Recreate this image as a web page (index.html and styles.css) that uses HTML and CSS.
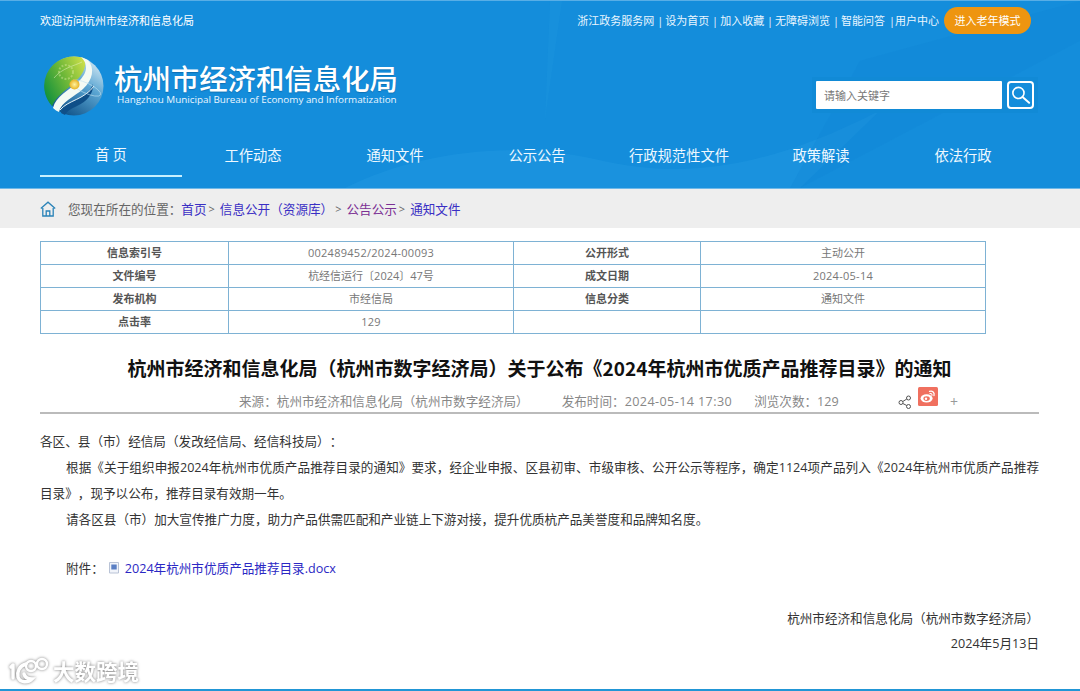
FILE: index.html
```html
<!DOCTYPE html>
<html lang="zh-CN">
<head>
<meta charset="utf-8">
<title>杭州市经济和信息化局</title>
<link rel="stylesheet" href="styles.css">
</head>
<body>
<header class="header">
  <svg class="decor" viewBox="0 0 1080 188" preserveAspectRatio="none" aria-hidden="true">
    <path d="M345 188 C420 150 520 140 600 160 C680 178 760 172 880 110 L800 188 Z" fill="#2aa0e6" opacity=".28"/>
    <path d="M550 0 L562 0 L545 120 Z" fill="#2aa0e6" opacity=".15"/>
    <path d="M860 60 L1080 0 L1080 40 L800 188 L790 188 Z" fill="#0f86d3" opacity=".3"/>
  </svg>
  <div class="topbar">
    <span class="welcome">欢迎访问杭州市经济和信息化局</span>
    <nav class="toplinks">
      <a class="tl-a">浙江政务服务网 |</a>
      <a class="tl-b">设为首页 |</a>
      <a class="tl-c">加入收藏 |</a>
      <a class="tl-d">无障碍浏览 |</a>
      <a class="tl-e">智能问答</a>
      <a class="tl-f">|用户中心</a>
      <a class="elder">进入老年模式</a>
    </nav>
  </div>
  <div class="brand-row">
    <div class="brand">
      <svg class="logo" viewBox="0 0 60 60" aria-hidden="true">
        <defs>
          <linearGradient id="lg" x1="0" y1="0.7" x2="1" y2="0.1">
            <stop offset="0" stop-color="#16933c"/><stop offset=".5" stop-color="#6fb838"/><stop offset="1" stop-color="#cfe04a"/>
          </linearGradient>
          <linearGradient id="lb" x1="0.9" y1="0.1" x2="0.3" y2="1">
            <stop offset="0" stop-color="#cfe6f2"/><stop offset=".4" stop-color="#5aa5d2"/><stop offset="1" stop-color="#0c4f86"/>
          </linearGradient>
          <radialGradient id="ls"><stop offset="0" stop-color="#fff3a0"/><stop offset="1" stop-color="#e8b323"/></radialGradient>
        </defs>
        <circle cx="30" cy="30" r="29.5" fill="url(#lb)"/>
        <path d="M30 .5 A29.5 29.5 0 0 0 8 50 C12 40 22 34 30 27 C38 20 44 10 40 2 A30 30 0 0 0 30 .5Z" fill="url(#lg)"/>
        <path d="M37 1 C46 10 42 19 33 27 C24 35 12 40 9 52 C11 54 13 55 15 56 C17 46 30 41 39 33 C49 24 51 12 44 4 Z" fill="#f4faf4"/>
        <path d="M17 57 C20 47 34 45 43 37 C46 34 48 31 49 28 C50 38 42 46 33 50 C26 53 22 56 21 59 Z" fill="#0f4f88"/>
        <path d="M16 54 C24 44 40 44 50 30" fill="none" stroke="#e6f2f8" stroke-width="1"/>
        <ellipse cx="42" cy="32" rx="16" ry="5" transform="rotate(25 42 32)" fill="none" stroke="#bfe0f0" stroke-width=".7" opacity=".8"/>
        <circle cx="22" cy="16" r="7" fill="none" stroke="#e6f0a8" stroke-width="2" stroke-dasharray="2 1.5" opacity=".4"/>
        <path d="M10 22 C18 12 30 10 38 6" fill="none" stroke="#e8f4c8" stroke-width=".7" opacity=".7"/>
        <circle cx="30.5" cy="28.5" r="5" fill="url(#ls)"/>
      </svg>
      <div class="brand-text">
        <div class="brand-cn">杭州市经济和信息化局</div>
        <div class="brand-en">Hangzhou Municipal Bureau of Economy and Informatization</div>
      </div>
    </div>
    <form class="search">
      <input class="search-input" type="text" placeholder="请输入关键字">
      <button class="search-btn" type="button" aria-label="搜索">
        <svg viewBox="0 0 28 28" aria-hidden="true">
          <circle cx="11.5" cy="11.5" r="6.8" fill="none" stroke-width="2"/>
          <path d="M16.5 16.5 L24.5 23.5" stroke-width="2.4" stroke-linecap="round"/>
        </svg>
      </button>
    </form>
  </div>
  <nav class="mainnav">
    <a class="nav-item is-active">首 页</a>
    <a class="nav-item">工作动态</a>
    <a class="nav-item">通知文件</a>
    <a class="nav-item">公示公告</a>
    <a class="nav-item">行政规范性文件</a>
    <a class="nav-item">政策解读</a>
    <a class="nav-item">依法行政</a>
  </nav>
</header>

<div class="crumbs">
  <svg class="home" viewBox="0 0 16 16" aria-hidden="true">
    <path d="M.8 7.5 L8 1.2 L15.2 7.5" fill="none" stroke="#2a83b8" stroke-width="1.3"/>
    <path d="M2.8 7 V15 H13.2 V7" fill="none" stroke="#2a83b8" stroke-width="1.3"/>
    <path d="M6.2 15 V10 H9.8 V15" fill="none" stroke="#2a83b8" stroke-width="1.3"/>
  </svg>
  <span class="crumb-label">您现在所在的位置：</span>
  <a class="crumb-link">首页</a><span class="crumb-sep">&gt;</span>
  <a class="crumb-link">信息公开（资源库）</a><span class="crumb-sep wide">&gt;</span>
  <a class="crumb-link visited">公告公示</a><span class="crumb-sep">&gt;</span>
  <a class="crumb-link">通知文件</a>
</div>

<main class="main">
  <table class="info">
    <colgroup><col class="c1"><col class="c2"><col class="c3"><col class="c4"></colgroup>
    <tr><th>信息索引号</th><td class="num">002489452/2024-00093</td><th>公开形式</th><td>主动公开</td></tr>
    <tr><th>文件编号</th><td>杭经信运行〔2024〕47号</td><th>成文日期</th><td class="num">2024-05-14</td></tr>
    <tr><th>发布机构</th><td>市经信局</td><th>信息分类</th><td>通知文件</td></tr>
    <tr><th>点击率</th><td class="num">129</td><th></th><td></td></tr>
  </table>

  <h1 class="title">杭州市经济和信息化局（杭州市数字经济局）关于公布《2024年杭州市优质产品推荐目录》的通知</h1>

  <div class="meta">
    <span class="meta-src">来源：杭州市经济和信息化局（杭州市数字经济局）</span>
    <span class="meta-time">发布时间：<span class="meta-num">2024-05-14 17:30</span></span>
    <span class="meta-views">浏览次数：129</span>
    <span class="share">
      <svg class="ico-share" viewBox="0 0 14 14" aria-hidden="true">
        <circle cx="3" cy="7.5" r="2" fill="none" stroke="#555" stroke-width="1"/>
        <circle cx="10.5" cy="3" r="2" fill="none" stroke="#555" stroke-width="1"/>
        <circle cx="10.5" cy="11.5" r="2" fill="none" stroke="#555" stroke-width="1"/>
        <path d="M4.8 6.5 L8.8 4 M4.8 8.5 L8.8 10.5" stroke="#555" stroke-width="1"/>
      </svg>
      <svg class="ico-weibo" viewBox="0 0 20 19" aria-hidden="true">
        <rect width="20" height="19" rx="1.5" fill="#f0705f"/>
        <ellipse cx="8.6" cy="11.4" rx="6" ry="4.2" fill="#fff"/>
        <ellipse cx="8.6" cy="11.6" rx="3.2" ry="2.4" fill="#f0705f"/>
        <circle cx="8" cy="11.7" r="1.2" fill="#fff"/>
        <path d="M11.5 4.4 C14.5 3.4 16.8 5.6 16 8.6" fill="none" stroke="#fff" stroke-width="1.3" stroke-linecap="round"/>
        <path d="M12 6.6 C13.3 6.2 14.3 7.1 14 8.4" fill="none" stroke="#fff" stroke-width="1.1" stroke-linecap="round"/>
      </svg>
      <span class="plus">+</span>
    </span>
  </div>

  <article class="content">
    <p class="lead">各区、县（市）经信局（发改经信局、经信科技局）：</p>
    <p class="para">根据《关于组织申报2024年杭州市优质产品推荐目录的通知》要求，经企业申报、区县初审、市级审核、公开公示等程序，确定1124项产品列入《2024年杭州市优质产品推荐目录》，现予以公布，推荐目录有效期一年。</p>
    <p class="para">请各区县（市）加大宣传推广力度，助力产品供需匹配和产业链上下游对接，提升优质杭产品美誉度和品牌知名度。</p>
    <p class="attach">
      <span>附件：</span>
      <svg class="ico-doc" viewBox="0 0 12 12" aria-hidden="true">
        <path d="M1.5 .5 H10.5 V11 H1.5 Z" fill="#f1f4fa" stroke="#b9c3d6" stroke-width="1"/>
        <rect x="3.3" y="2.5" width="5.4" height="5" fill="#5a7fc4"/>
      </svg>
      <a class="attach-link">2024年杭州市优质产品推荐目录.docx</a>
    </p>
    <p class="sign org">杭州市经济和信息化局（杭州市数字经济局）</p>
    <p class="sign date">2024年5月13日</p>
  </article>
</main>
<div class="bottomline"></div>

<div class="watermark">
  <svg class="wm-logo" viewBox="0 0 42 28" aria-hidden="true">
    <path d="M4 8 V21 M4 8 L2 10" fill="none" stroke="#fff" stroke-width="3.4" stroke-linecap="round"/>
    <path d="M17 7 C10 9 8 15 9 20 C11 26 19 26 23 22 C20 22 16 21 15 17" fill="none" stroke="#fff" stroke-width="3.4" stroke-linecap="round"/>
    <circle cx="22" cy="9" r="5" fill="none" stroke="#fff" stroke-width="2.4"/>
    <circle cx="33" cy="7" r="5" fill="none" stroke="#fff" stroke-width="2.4"/>
  </svg>
  <span class="wm-text">大数跨境</span>
</div>
</body>
</html>
```
FILE: styles.css
```css
* { box-sizing: border-box; }
html, body { margin: 0; padding: 0; }
body {
  width: 1080px;
  height: 691px;
  overflow: hidden;
  position: relative;
  background: #fff;
  font-family: "Open Sans", "Noto Sans CJK SC", sans-serif;
  color: #333;
  text-spacing-trim: space-all;
}
a { color: inherit; text-decoration: none; }
p { margin: 0; }

.header {
  position: relative;
  height: 189px;
  background: #148ddb;
  border-top: 1px solid #58aee6;
  border-bottom: 1px solid #6fb8e8;
  padding: 0 46px 0 40px;
  color: #fff;
}
.decor { position: absolute; left: 0; top: 0; width: 100%; height: 100%; pointer-events: none; }
.topbar, .brand-row, .mainnav { position: relative; }

.topbar {
  display: flex;
  justify-content: space-between;
  align-items: center;
  height: 38px;
  padding-right: 3px;
  font-size: 11px;
}
.toplinks { display: flex; align-items: center; color: #eaf6ff; white-space: nowrap; }
.tl-a { margin-right: 2px; }
.tl-b, .tl-c, .tl-d { margin-right: 2px; }
.tl-e { margin-right: 4px; }
.tl-f { margin-right: 5px; }
.elder {
  display: flex;
  align-items: center;
  justify-content: center;
  width: 87px;
  height: 27px;
  border-radius: 14px;
  background: #ee9510;
  color: #fff;
}

.brand-row {
  display: flex;
  justify-content: space-between;
  align-items: flex-start;
  height: 91px;
  padding-top: 17px;
}
.brand { display: flex; margin-left: 4px; }
.logo { width: 60px; height: 60px; display: block; }
.brand-text { margin-left: 10px; padding-top: 7px; }
.brand-cn {
  font-family: "Noto Sans CJK SC", sans-serif;
  font-size: 28.4px;
  line-height: 30px;
  font-weight: 500;
  white-space: nowrap;
  text-shadow: 0 1px 1px rgba(0, 60, 110, .35);
}
.brand-en {
  font-size: 9.85px;
  line-height: 12px;
  margin: 0 0 0 3px;
  white-space: nowrap;
  color: #eaf6ff;
}

.search {
  display: flex;
  align-items: center;
  gap: 5px;
  margin-top: 21px;
  margin-right: -4px;
  padding: 4px;
  background: #118ad6;
}
.search-input {
  width: 186px;
  height: 28px;
  border: 0;
  border-radius: 1px;
  padding: 0 8px;
  font: 11px "Noto Sans CJK SC", sans-serif;
  background: #fff;
  outline: 0;
}
.search-input::placeholder { color: #777; opacity: 1; }
.search-btn {
  width: 27px;
  height: 28px;
  padding: 0;
  border: 2px solid #fff;
  border-radius: 4px;
  background: #148ddb;
  display: flex;
}
.search-btn svg { width: 100%; height: 100%; border-radius: 2px; stroke: #fff; }

.mainnav { display: flex; width: 994px; height: 59px; }
.nav-item {
  width: 142px;
  height: 47px;
  display: flex;
  align-items: center;
  justify-content: center;
  font-family: "Noto Sans CJK SC", sans-serif;
  font-size: 14.3px;
  color: #eef8ff;
  white-space: pre;
  padding-top: 2px;
}
.nav-item.is-active { border-bottom: 2px solid #c8f0ff; }

.crumbs {
  display: flex;
  align-items: center;
  height: 39px;
  padding-left: 40px;
  background: #eee;
  font-size: 12.6px;
  color: #555;
  white-space: nowrap;
}
.home { width: 16px; height: 16px; margin-right: 12px; }
.crumb-label { color: #666; }
.crumb-link { color: #3a2fc4; }
.crumb-link.visited { color: #7c3094; }
.crumb-sep { margin: 0 5px 0 2px; color: #666; font-size: 11px; }
.crumb-sep.wide { margin: 0 5px 0 2px; }

.main { padding: 13px 41px 0 40px; }
.info {
  width: 945px;
  border-collapse: collapse;
  table-layout: fixed;
  font-size: 11px;
  border: 1px solid #7eb2d4;
}
.c1 { width: 188px; }
.c2 { width: 285px; }
.c3 { width: 187px; }
.c4 { width: 285px; }
.info th, .info td {
  height: 23px;
  padding: 0 0 2px;
  border: 1px solid #7eb2d4;
  text-align: center;
  font-weight: 400;
  color: #777;
}
.info td.num { letter-spacing: .27px; }
.info th { color: #555; font-weight: 600; }

.title {
  margin: 21px 0 0;
  text-align: center;
  font-family: "Noto Sans CJK SC", sans-serif;
  font-size: 19px;
  line-height: 26px;
  font-weight: 700;
  color: #111;
  white-space: nowrap;
}
.meta {
  display: flex;
  align-items: center;
  height: 33px;
  padding: 7px 81px 0 199px;
  border-bottom: 2px solid #bbb;
  font-size: 12.6px;
  color: #888;
  white-space: nowrap;
}
.meta-time { margin-left: 33px; }
.meta-num { letter-spacing: .4px; }
.meta-views { margin-left: 22px; }
.share { display: flex; align-items: center; margin-left: auto; }
.ico-share { width: 14px; height: 14px; margin-top: 3px; }
.ico-weibo { width: 20px; height: 19px; margin: -8px 0 0 6px; }
.plus { margin-left: 12px; font-size: 14px; color: #999; margin-top: 2px; }

.content { font-size: 12.6px; line-height: 26px; color: #333; padding-top: 15px; }
.para { text-indent: 26px; text-align: justify; }
.attach {
  display: flex;
  align-items: center;
  margin: 23px 0 0 26px;
  height: 26px;
}
.ico-doc { width: 12px; height: 12px; margin: -3px 5px 0 4px; }
.attach-link { color: #2b28c4; }
.sign { text-align: right; }
.org { margin-top: 24px; padding-right: 0; }
.date { margin-top: -1px; }

.bottomline { position: absolute; left: 0; right: 0; bottom: 0; height: 2px; background: #2196d6; }

.watermark {
  position: absolute;
  left: 9px;
  top: 657px;
  display: flex;
  align-items: center;
  filter: drop-shadow(0 0 1.5px rgba(80, 80, 80, .75));
}
.wm-logo { width: 42px; height: 28px; }
.wm-text {
  margin-left: 2px;
  font-family: "Noto Sans CJK SC", sans-serif;
  font-size: 21.5px;
  line-height: 28px;
  font-weight: 700;
  color: #fff;
  white-space: nowrap;
}
```
